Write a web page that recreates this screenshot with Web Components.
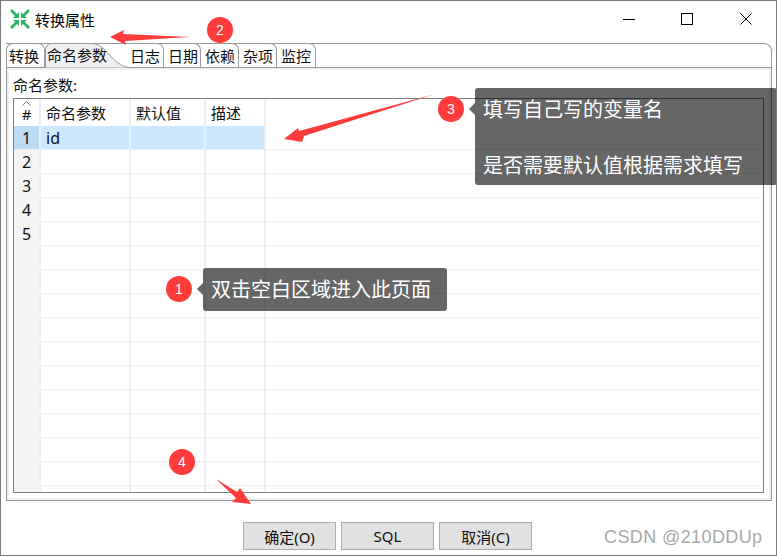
<!DOCTYPE html>
<html>
<head>
<meta charset="utf-8">
<style>
    html, body { margin: 0; padding: 0; background: #fff; }
    body { width: 777px; height: 557px; overflow: hidden; font-family: "Noto Sans", "Noto Sans CJK SC", sans-serif; }
</style>
</head>
<body>
<dialog-window>
    <title-bar>转换属性</title-bar>
    <tab-pane>
        <param-table></param-table>
    </tab-pane>
    <button-row></button-row>
    <note-bubble num="1" style="left:165px;top:267px;width:281px;height:43px">双击空白区域进入此页面</note-bubble>
    <note-bubble num="3" style="left:437px;top:87px;width:339px;height:97px">填写自己写的变量名<br><br>是否需要默认值根据需求填写</note-bubble>
    <step-dot num="2" style="left:206px;top:16px"></step-dot>
    <step-dot num="4" style="left:168px;top:448px"></step-dot>
    <red-arrows></red-arrows>
    <water-mark>CSDN @210DDUp</water-mark>
</dialog-window>

<script>
class dialogWindow extends HTMLElement {
    constructor() {
        super()
        this.attachShadow({mode: "open"});
        this.shadowRoot.innerHTML = /*html*/ `
            <style>
                :host {
                    display: flex;
                    flex-direction: column;
                    position: relative;
                    box-sizing: border-box;
                    width: 777px;
                    height: 556px;
                    background: #fff;
                    border: 1px solid #7a7a7a;
                    overflow: hidden;
                }
            </style>
            <slot></slot>
        `
    }
}

class titleBar extends HTMLElement {
    constructor() {
        super()
        this.attachShadow({mode: "open"});
        this.shadowRoot.innerHTML = /*html*/ `
            <style>
                :host {
                    display: flex;
                    align-items: center;
                    height: 36px;
                    padding-left: 9px;
                    flex: none;
                    font-size: 15px;
                    color: #000;
                }
                svg { flex: none; }
                .name { margin-left: 5px; flex: 1; }
                .ctl { flex: none; width: 12px; height: 12px; margin-right: 47px; display: block; }
                .ctl.min { margin-right: 46px; }
                .ctl:last-child { margin-right: 24px; }
            </style>
            <svg width="20" height="20" viewBox="0 0 20 20">
                <g fill="#2fb566">
                    <polygon points="0,2 2,0 7,5 9,3 9,9 3,9 5,7"/>
                    <polygon points="20,2 18,0 13,5 11,3 11,9 17,9 15,7"/>
                    <polygon points="0,18 2,20 7,15 9,17 9,11 3,11 5,13"/>
                    <polygon points="20,18 18,20 13,15 11,17 11,11 17,11 15,13"/>
                </g>
            </svg>
            <span class="name"><slot></slot></span>
            <svg class="ctl min" viewBox="0 0 12 12"><path d="M0 6.5H12" stroke="#000" fill="none"/></svg>
            <svg class="ctl" viewBox="0 0 12 12"><rect x=".5" y=".5" width="11" height="11" stroke="#000" fill="none"/></svg>
            <svg class="ctl" viewBox="0 0 12 12"><path d="M.5 .5L11.5 11.5M11.5 .5L.5 11.5" stroke="#000" fill="none"/></svg>
        `
    }
}

class tabPane extends HTMLElement {
    constructor() {
        super()
        this.attachShadow({mode: "open"});
        this.shadowRoot.innerHTML = /*html*/ `
            <style>
                :host {
                    display: block;
                    flex: none;
                    position: relative;
                    margin: 6px 4px 0 5px;
                    width: 766px;
                    height: 458px;
                    font-size: 15px;
                    color: #111;
                }
                .strip {
                    display: flex;
                    height: 24px;
                    box-sizing: border-box;
                    border-top: 1px solid #9a9a9a;
                    border-right: 1px solid #9a9a9a;
                    border-radius: 0 8px 0 0;
                }
                .tab {
                    box-sizing: border-box;
                    height: 24px;
                    margin-top: -1px;
                    line-height: 25px;
                    padding-left: 4px;
                    border: 1px solid #9a9a9a;
                    border-left: 0;
                    border-bottom: 0;
                    border-radius: 0 7px 0 0;
                    white-space: nowrap;
                    flex: none;
                    background: #fff;
                }
                .tab:first-child { border-left: 1px solid #9a9a9a; border-radius: 7px 7px 0 0; width: 39px; padding-left: 2px; }
                .cur {
                    width: 82px;
                    padding-left: 2px;
                    border: 0;
                    position: relative;
                    background: transparent;
                    z-index: 1;
                }
                .cur svg { position: absolute; left: 0; top: 0; }
                .cur span { position: relative; }
                .body {
                    box-sizing: border-box;
                    height: 434px;
                    border: 1px solid #9a9a9a;
                    background: #f0f0f0;
                    padding: 2px;
                }
                .page {
                    box-sizing: border-box;
                    height: 100%;
                    background: #fff;
                    padding: 6px 4px 5px;
                }
                .cap { height: 22px; line-height: 18px; }
            </style>
            <div class="strip">
                <div class="tab">转换</div>
                <div class="tab cur">
                    <svg width="86" height="25" viewBox="0 0 86 25">
                        <path d="M.5 25V7Q.5 .5 7 .5H47C62 .5 66 23 85 24.5V25Z" fill="#f0f0f0" stroke="#9a9a9a"/>
                    </svg>
                    <span>命名参数</span>
                </div>
                <div class="tab" style="width:37px;padding-left:3px">日志</div>
                <div class="tab" style="width:37px">日期</div>
                <div class="tab" style="width:38px">依赖</div>
                <div class="tab" style="width:38px">杂项</div>
                <div class="tab" style="width:39px">监控</div>
            </div>
            <div class="body">
                <div class="page">
                    <div class="cap">命名参数:</div>
                    <slot></slot>
                </div>
            </div>
        `
    }
}

class paramTable extends HTMLElement {
    constructor() {
        super()
        this.attachShadow({mode: "open"});
    }

    getRows() {
        let html = ""
        for (let i = 1; i <= 16; i++) {
            html += `<div class="row ${i == 1 ? "sel" : ""}">
                <div class="num">${i <= 5 ? i : ""}</div>
                <div class="c a">${i == 1 ? "id" : ""}</div>
                <div class="c b"></div>
                <div class="c d"></div>
                <div class="c e"></div>
            </div>`
        }
        return html
    }

    connectedCallback() {
        this.shadowRoot.innerHTML = /*html*/ `
            <style>
                :host {
                    display: block;
                    box-sizing: border-box;
                    width: 751px;
                    height: 395px;
                    border: 1px solid #808080;
                    overflow: hidden;
                    background: #fff;
                    font-size: 15px;
                    color: #111;
                }
                .row { display: flex; height: 24px; box-sizing: border-box; border-bottom: 1px solid #eceef3; }
                .head { height: 27px; border-bottom: 0; }
                .num, .c { flex: none; box-sizing: border-box; border-right: 2px solid #eaf0f7; line-height: 24px; }
                .num { width: 27px; background: #f4f4f4; text-align: center; position: relative; font-size: 16px; }
                .a { width: 90px; padding-left: 5px; }
                .b { width: 75px; padding-left: 5px; }
                .d { width: 60px; padding-left: 5px; }
                .e { flex: 1; border-right: 0; }
                .head .num, .head .c { line-height: 28px; background: #fff; }
                .head .e { border: 0; }
                .head .num { font-size: 15px; padding-top: 3px; line-height: 24px; }
                .head svg { position: absolute; left: 8px; top: 2px; }
                .sel .num { background: #bcdcf5; }
                .sel .a, .sel .b, .sel .d { background: #cce8ff; border-right-color: #e6f2fb; font-size: 16px; }
            </style>
            <div class="row head">
                <div class="num"><svg width="9" height="5" viewBox="0 0 9 5"><path d="M.5 4.5L4.5 .5L8.5 4.5" stroke="#777" fill="none"/></svg>#</div>
                <div class="c a">命名参数</div>
                <div class="c b">默认值</div>
                <div class="c d">描述</div>
                <div class="c e"></div>
            </div>
            ${this.getRows()}
        `
    }
}

class buttonRow extends HTMLElement {
    constructor() {
        super()
        this.attachShadow({mode: "open"});
        this.shadowRoot.innerHTML = /*html*/ `
            <style>
                :host {
                    display: flex;
                    justify-content: flex-start;
                    gap: 5px;
                    margin: 21px 0 0 242px;
                    flex: none;
                }
                button {
                    box-sizing: border-box;
                    width: 93px;
                    height: 28px;
                    padding: 0;
                    background: #e1e1e1;
                    border: 1px solid #adadad;
                    font: 15px "Noto Sans", "Noto Sans CJK SC", sans-serif;
                    color: #111;
                }
            </style>
            <button>确定(O)</button>
            <button>SQL</button>
            <button>取消(C)</button>
        `
    }
}

class stepDot extends HTMLElement {
    constructor() {
        super()
        this.attachShadow({mode: "open"});
    }

    connectedCallback() {
        this.shadowRoot.innerHTML = /*html*/ `
            <style>
                :host {
                    display: flex;
                    align-items: center;
                    justify-content: center;
                    position: absolute;
                    width: 26px;
                    height: 26px;
                    border-radius: 50%;
                    background: #ff3b3b;
                    color: #fff;
                    font: 14px "Liberation Sans", sans-serif;
                }
            </style>
            ${this.getAttribute("num")}
        `
    }
}

class noteBubble extends HTMLElement {
    constructor() {
        super()
        this.attachShadow({mode: "open"});
    }

    connectedCallback() {
        this.shadowRoot.innerHTML = /*html*/ `
            <style>
                :host {
                    display: flex;
                    position: absolute;
                    box-sizing: border-box;
                    color: #fff;
                    font-size: 20px;
                    line-height: 28px;
                }
                .dot {
                    flex: none;
                    width: 26px;
                    height: 26px;
                    margin: 8px 11px 0 0;
                    border-radius: 50%;
                    background: #ff3b3b;
                    font: 14px/26px "Liberation Sans", sans-serif;
                    text-align: center;
                }
                .tip {
                    flex: 1;
                    position: relative;
                    box-sizing: border-box;
                    padding: 8px 8px 7px;
                    background: rgba(0, 0, 0, .6);
                    border-radius: 3px;
                    white-space: nowrap;
                }
                .tip::before {
                    content: "";
                    position: absolute;
                    left: -6px;
                    top: 15px;
                    border: 6px solid transparent;
                    border-left: 0;
                    border-right-color: rgba(0, 0, 0, .6);
                }
            </style>
            <div class="dot">${this.getAttribute("num")}</div>
            <div class="tip"><slot></slot></div>
        `
    }
}

class redArrows extends HTMLElement {
    constructor() {
        super()
        this.attachShadow({mode: "open"});
        this.shadowRoot.innerHTML = /*html*/ `
            <style>
                :host { display: block; position: absolute; left: -1px; top: -1px; width: 777px; height: 557px; pointer-events: none; }
                svg { display: block; }
            </style>
            <svg width="777" height="557" viewBox="0 0 777 557" fill="#ff3b3b">
                <polygon points="110,37 124,30 123,34 190,37 125,41 126,45"/>
                <polygon points="284,139 298,128 299,131 435,94 304,136 302,142"/>
                <polygon points="216,479 237,492 240,488 251,504 232,502 236,498"/>
            </svg>
        `
    }
}

class waterMark extends HTMLElement {
    constructor() {
        super()
        this.attachShadow({mode: "open"});
        this.shadowRoot.innerHTML = /*html*/ `
            <style>
                :host {
                    display: block;
                    position: absolute;
                    left: 603px;
                    top: 526px;
                    font: 18px "Liberation Sans", sans-serif;
                    letter-spacing: .4px;
                    color: #a9a9a9;
                    white-space: nowrap;
                }
            </style>
            <slot></slot>
        `
    }
}

customElements.define('dialog-window', dialogWindow);
customElements.define('title-bar', titleBar);
customElements.define('tab-pane', tabPane);
customElements.define('param-table', paramTable);
customElements.define('button-row', buttonRow);
customElements.define('step-dot', stepDot);
customElements.define('note-bubble', noteBubble);
customElements.define('red-arrows', redArrows);
customElements.define('water-mark', waterMark);
</script>
</body>
</html>
